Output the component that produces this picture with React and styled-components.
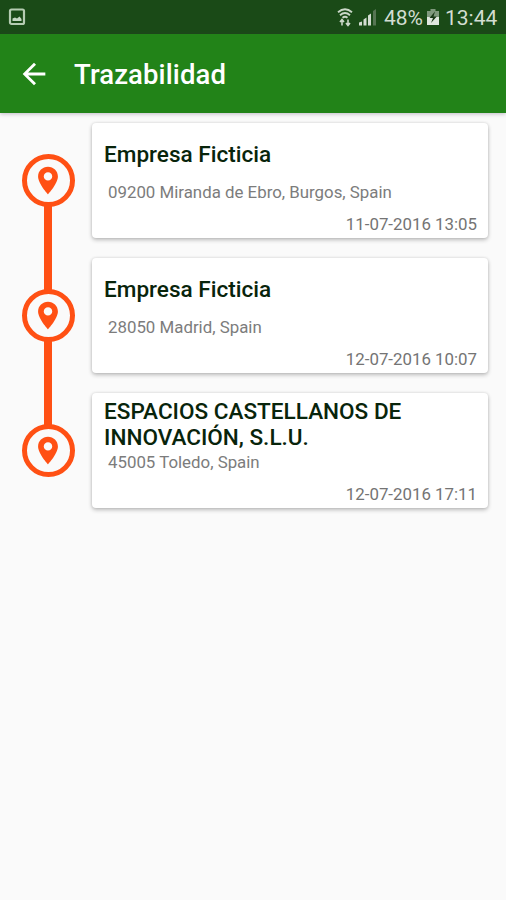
import React from "react";
import styled, { createGlobalStyle } from "styled-components";

const GlobalStyle = createGlobalStyle`
  * { box-sizing: border-box; }
  body { margin: 0; background: #fafafa; font-family: Roboto, sans-serif; }
`;

const Screen = styled.div`
  display: flex;
  flex-direction: column;
  min-height: 900px;
  background: #fafafa;
`;

const StatusBar = styled.div`
  display: flex;
  align-items: center;
  height: 34px;
  padding: 0 8px;
  background: #1a4a17;
  color: #d3ddd2;
`;

const StatusIcons = styled.div`
  display: flex;
  align-items: center;
  margin-left: auto;
`;

const StatusText = styled.span`
  font-size: 21px;
  line-height: 34px;
  width: ${(p) => p.$width}px;
  white-space: nowrap;
  padding-top: 1px;
`;

const Glyph = styled.svg`
  display: block;
  flex: none;
  margin-right: ${(p) => p.$gap || 0}px;
`;

const AppBar = styled.header`
  display: flex;
  align-items: center;
  height: 79px;
  padding-left: 17px;
  background: #228318;
  color: #fff;
  box-shadow: 0 1px 4px rgba(60, 40, 80, 0.3);
`;

const BackButton = styled.button`
  display: flex;
  border: 0;
  padding: 0;
  margin-right: 23px;
  background: none;
  color: inherit;
`;

const Heading = styled.h1`
  margin: 0;
  padding-top: 3px;
  font-size: 27.5px;
  font-weight: 500;
  letter-spacing: 0.1px;
  line-height: 34px;
`;

const Timeline = styled.main`
  display: flex;
  flex-direction: column;
  padding: 10px 18px 0 22px;
`;

const Stop = styled.div`
  display: grid;
  grid-template-columns: 53px 396px;
  column-gap: 17px;
  height: 135px;
`;

const Track = styled.div`
  display: flex;
  flex-direction: column;
  height: 135px;
  padding-top: 31px;
`;

const Marker = styled.div`
  display: flex;
  flex: none;
  align-items: center;
  padding-left: 4px;
  width: 53px;
  height: 53px;
  border: 5px solid #ff5014;
  border-radius: 50%;
  color: #ff5014;
`;

const Connector = styled.div`
  flex: none;
  width: 8px;
  height: 84px;
  margin: -1px 0 0 22px;
  background: #ff5014;
`;

const Card = styled.article`
  display: flex;
  flex-direction: column;
  height: 115px;
  padding: 3px 11px 0 12px;
  background: #fff;
  border-radius: 4px;
  box-shadow: 0 2px 4px rgba(0, 0, 0, 0.24), 0 0 3px rgba(0, 0, 0, 0.12);
`;

const CompanyBox = styled.div`
  display: flex;
  align-items: center;
  height: 57px;
`;

const Company = styled.h2`
  margin: 0;
  color: #08240b;
  font-size: 22.55px;
  font-weight: 500;
  line-height: 26px;
  white-space: pre-line;
`;

const Address = styled.p`
  margin: -1px 0 0 4px;
  color: #7c7c7c;
  font-size: 16.85px;
  line-height: 20px;
`;

const Timestamp = styled.time`
  margin-top: 12px;
  color: #747474;
  font-size: 16.85px;
  line-height: 20px;
  text-align: right;
`;

const stops = [
  { company: "Empresa Ficticia", address: "09200 Miranda de Ebro, Burgos, Spain", time: "11-07-2016 13:05" },
  { company: "Empresa Ficticia", address: "28050 Madrid, Spain", time: "12-07-2016 10:07" },
  { company: "ESPACIOS CASTELLANOS DE\nINNOVACIÓN, S.L.U.", address: "45005 Toledo, Spain", time: "12-07-2016 17:11" },
];

const PictureIcon = () => (
  <Glyph width="18" height="18" viewBox="0 0 18 18">
    <rect x="2" y="1.5" width="14" height="14.500" rx="1.5" fill="none" stroke="#b5ccb2" strokeWidth="2.200" />
    <path d="M4.500 13v-2.500l2.500-1 2 1 2.500-2 2 2.500v2z" fill="#c4d6c2" />
  </Glyph>
);

const WifiIcon = () => (
  <Glyph $gap={6} width="16" height="19" viewBox="0 0 16 19" fill="none" stroke="#cbd8c9" strokeWidth="1.9">
    <path d="M1 4.200Q8-1.500 15 4.200M3 7.200Q8 3 13 7.200M5.500 9.800Q8 7.800 10.500 9.800" />
    <path d="M5 17.500v-6M3 14l2-2.500L7 14M11 11.500v6M9 15l2 2.500 2-2.500" strokeWidth="1.600" />
  </Glyph>
);

const SignalIcon = () => (
  <Glyph $gap={7} width="18" height="18" viewBox="0 0 18 18" fill="#d3ddd2">
    <path d="M0 17.500v-3l3-1v4zM4.500 17.500v-6l3-2v8zM9 17.500V7.500l3-2v12z" />
    <path d="M14 17.500V3l3-2v16.500z" fill="#567553" />
  </Glyph>
);

const BatteryIcon = () => (
  <Glyph $gap={6} width="12" height="18" viewBox="0 0 12 18">
    <path d="M3.500 1h5v2H12v6H0V3h3.500z" fill="#7f987d" />
    <path d="M0 9h12v8H0z" fill="#e0e7df" />
    <path d="M8 3.500L2.500 10H6l-2 5 5.800-6.500H6.500z" fill="#1a3918" />
  </Glyph>
);

const PinIcon = () => (
  <svg width="34" height="33" viewBox="0 0 24 24" preserveAspectRatio="none" fill="currentColor">
    <path d="M12 2C8.130 2 5 5.130 5 9c0 5.250 7 13 7 13s7-7.750 7-13c0-3.870-3.130-7-7-7zm0 10a3 3 0 1 1 0-6 3 3 0 0 1 0 6z" />
  </svg>
);

export default function App() {
  return (
    <Screen>
      <GlobalStyle />
      <StatusBar>
        <PictureIcon />
        <StatusIcons>
          <WifiIcon />
          <SignalIcon />
          <StatusText $width={43}>48%</StatusText>
          <BatteryIcon />
          <StatusText $width={53}>13:44</StatusText>
        </StatusIcons>
      </StatusBar>
      <AppBar>
        <BackButton aria-label="Back">
          <svg width="34" height="34" viewBox="0 0 24 24" fill="currentColor">
            <path d="M20 11H7.830l5.590-5.590L12 4l-8 8 8 8 1.410-1.410L7.830 13H20v-2z" />
          </svg>
        </BackButton>
        <Heading>Trazabilidad</Heading>
      </AppBar>
      <Timeline>
        {stops.map((stop, i) => (
          <Stop key={stop.time}>
            <Track>
              <Marker>
                <PinIcon />
              </Marker>
              {i < stops.length - 1 && <Connector />}
            </Track>
            <Card>
              <CompanyBox>
                <Company>{stop.company}</Company>
              </CompanyBox>
              <Address>{stop.address}</Address>
              <Timestamp>{stop.time}</Timestamp>
            </Card>
          </Stop>
        ))}
      </Timeline>
    </Screen>
  );
}
